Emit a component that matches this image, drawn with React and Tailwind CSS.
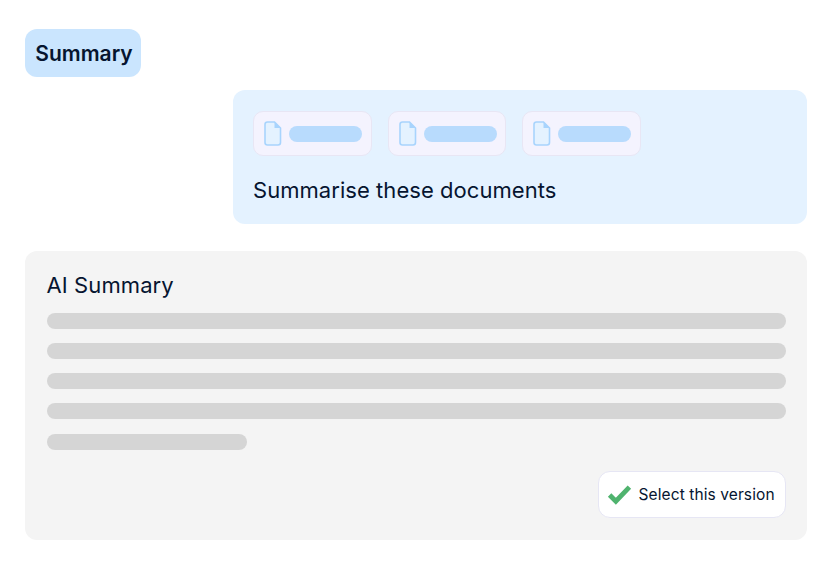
const DocChip = () => (
  <div className="flex items-center gap-[7px] w-[118.7px] h-[45px] pl-[10px] rounded-[10px] bg-[#f4f3fe] border border-[#e8e6f4]">
    <svg width="18" height="25" viewBox="0 0 18 25" fill="none" className="shrink-0">
      <path d="M3.5 1H10.5L16.5 7V21.5C16.5 22.9 15.4 24 14 24H3.5C2.1 24 1 22.9 1 21.5V3.5C1 2.1 2.1 1 3.5 1Z" stroke="#a8d4fd" strokeWidth="1.6" fill="#e4f2ff" />
      <path d="M10.5 1V7H16.5Z" fill="#a8d4fd" />
    </svg>
    <div className="w-[73px] h-[16px] rounded-full bg-[#b8dbfd]" />
  </div>
);

const lines = ['w-full', 'w-full', 'w-full', 'w-full', 'w-[200.5px]'];

export default function App() {
  return (
    <div className="w-[837px] h-[574px] bg-white pt-[29px] pl-[25px] pr-[30px] text-[#061530] font-['Inter',sans-serif]">
      <div className="w-[116px] h-[48px] pl-[2px] pt-[2px] flex items-center justify-center rounded-[12px] bg-[#cae5fe] text-[21px] font-semibold">
        Summary
      </div>

      <div className="ml-[207.5px] mt-[13px] w-[574px] h-[134px] rounded-[12px] bg-[#e4f2ff] pt-[21px] pl-[20.5px]">
        <div className="flex gap-[16px]">
          <DocChip />
          <DocChip />
          <DocChip />
        </div>
        <p className="mt-[20px] text-[22px] leading-[28px] tracking-[0.05px]">Summarise these documents</p>
      </div>

      <div className="mt-[27px] w-[781.5px] h-[289px] rounded-[12px] bg-[#f4f4f4] pt-[20px] pl-[21.5px] pr-[21px]">
        <h2 className="text-[22px] leading-[28px] tracking-[0.1px]">AI Summary</h2>
        <div className="mt-[14px] flex flex-col gap-[14.15px]">
          {lines.map((w, i) => (
            <div key={i} className={`${w} h-[16px] rounded-full bg-[#d5d5d5]`} />
          ))}
        </div>
        <div className="mt-[21.3px] flex justify-end">
          <button className="flex items-center gap-[7px] w-[188px] h-[47.5px] pl-[8px] rounded-[12px] bg-white border border-[#e6e6f4] text-[15.5px] tracking-[0.1px]">
            <svg width="25" height="21" viewBox="0 0 24 20" fill="none" className="shrink-0">
              <path d="M2.5 10.5L8.5 16.5L21.5 3" stroke="#4fb36e" strokeWidth="4.6" />
            </svg>
            <span className="pt-[1px]">Select this version</span>
          </button>
        </div>
      </div>
    </div>
  );
}
